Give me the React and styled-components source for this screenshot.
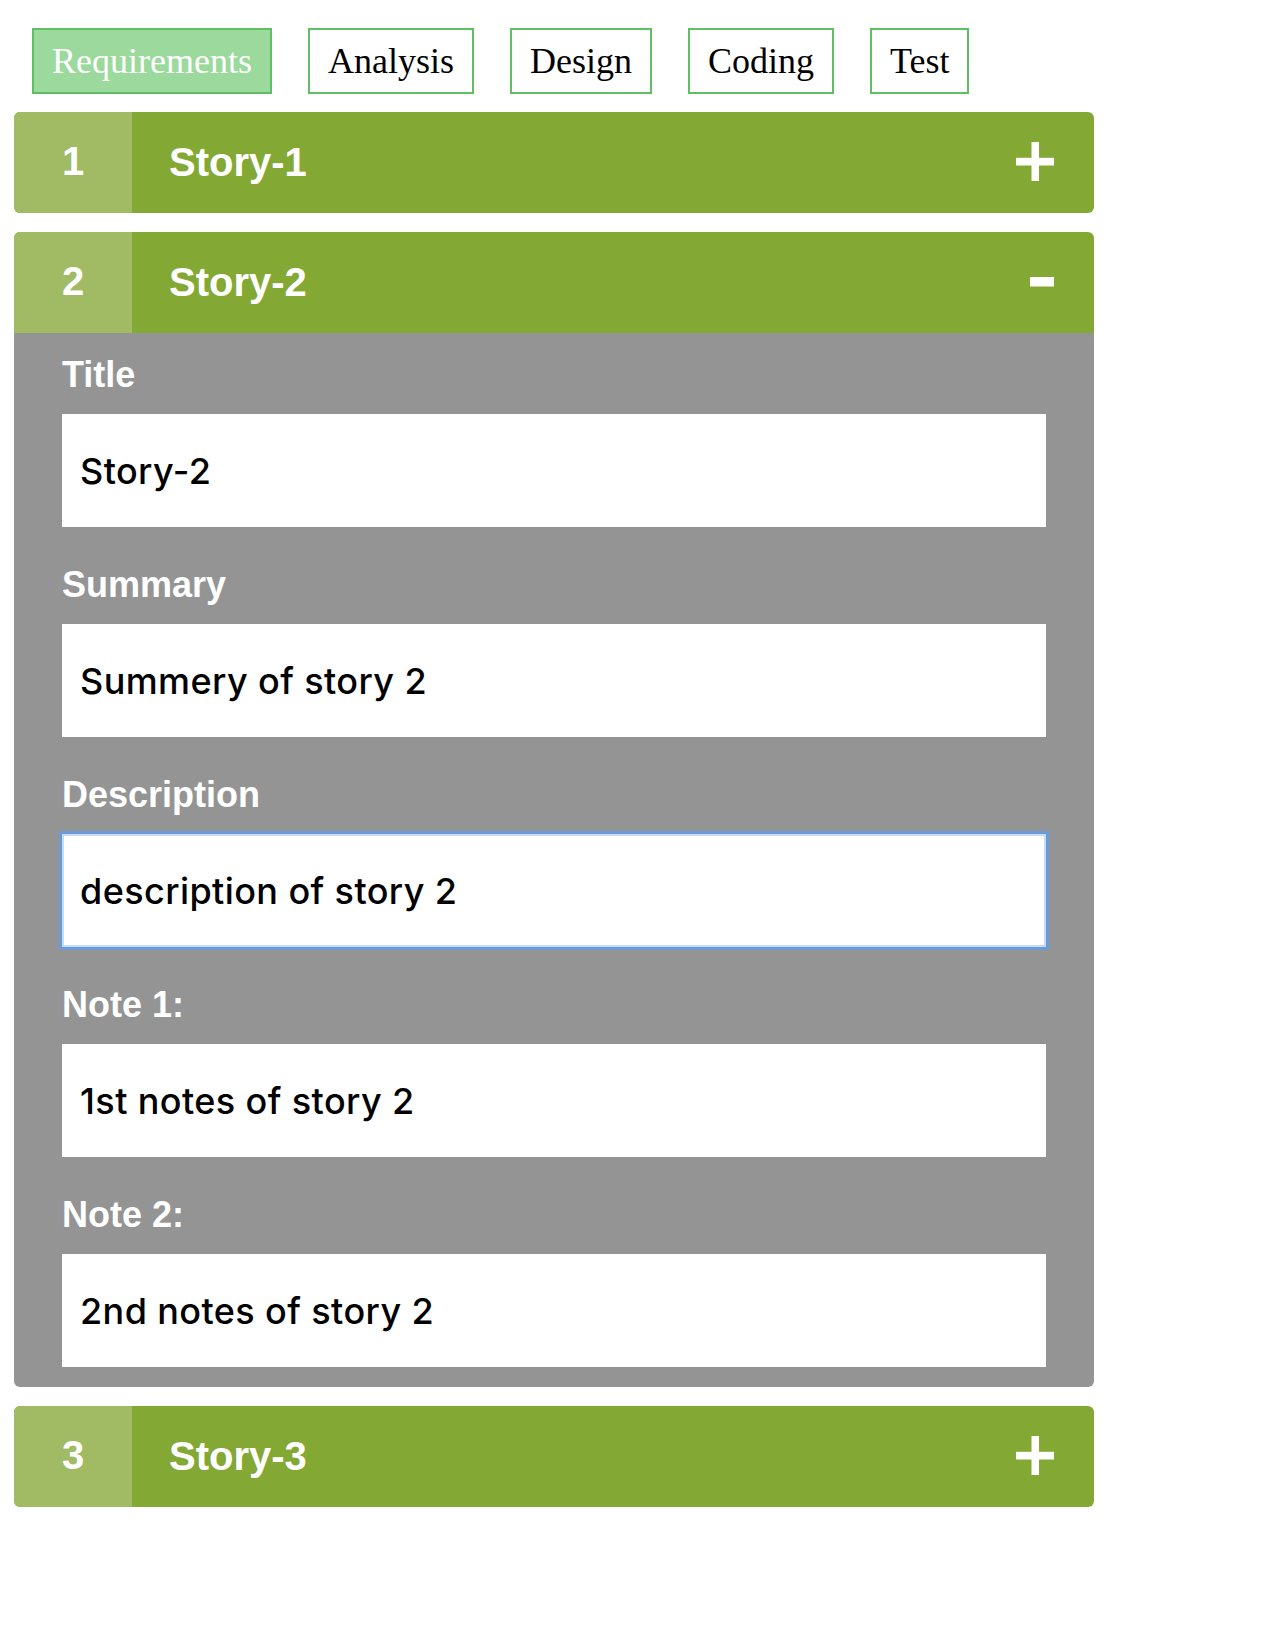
import React, { useState } from 'react'
import styled, { createGlobalStyle } from 'styled-components'

const GlobalStyle = createGlobalStyle`
  body {
    margin: 8px;
    background: #ffffff;
    font-family: "Liberation Sans", Arial, sans-serif;
  }
`

const stages = ['Requirements', 'Analysis', 'Design', 'Coding', 'Test']

const stories = [
  {
    id: 1,
    title: 'Story-1',
    summary: 'Summery of story 1',
    description: 'description of story 1',
    note1: '1st notes of story 1',
    note2: '2nd notes of story 1'
  },
  {
    id: 2,
    title: 'Story-2',
    summary: 'Summery of story 2',
    description: 'description of story 2',
    note1: '1st notes of story 2',
    note2: '2nd notes of story 2'
  },
  {
    id: 3,
    title: 'Story-3',
    summary: 'Summery of story 3',
    description: 'description of story 3',
    note1: '1st notes of story 3',
    note2: '2nd notes of story 3'
  }
]

const fields = [
  { key: 'title', label: 'Title' },
  { key: 'summary', label: 'Summary' },
  { key: 'description', label: 'Description' },
  { key: 'note1', label: 'Note 1:' },
  { key: 'note2', label: 'Note 2:' }
]

function PlusIcon() {
  return (
    <svg width="38" height="40" viewBox="0 0 38 40">
      <rect x="15.5" y="0" width="7.5" height="39" fill="#fff" />
      <rect x="0" y="15.8" width="38" height="7.7" fill="#fff" />
    </svg>
  )
}

function MinusIcon() {
  return (
    <svg width="38" height="40" viewBox="0 0 38 40">
      <rect x="14" y="15" width="24" height="9.5" fill="#fff" />
    </svg>
  )
}

export default function App() {
  const [active, setActive] = useState('Requirements')
  const [open, setOpen] = useState(2)

  return (
    <Page>
      <GlobalStyle />

      {/* stage tabs */}
      <Tabs>
        {stages.map((stage) => (
          <Tab
            key={stage}
            type="button"
            $active={stage === active}
            onClick={() => setActive(stage)}
          >
            {stage}
          </Tab>
        ))}
      </Tabs>

      {/* stories */}
      <Accordion>
        {stories.map((story) => {
          const isOpen = open === story.id
          return (
            <Item key={story.id}>
              <Header onClick={() => setOpen(isOpen ? null : story.id)}>
                <Num>{story.id}</Num>
                <HeaderTitle>{story.title}</HeaderTitle>
                <Toggle>{isOpen ? <MinusIcon /> : <PlusIcon />}</Toggle>
              </Header>

              {isOpen && (
                <Body>
                  {fields.map((f) => (
                    <Field key={f.key}>
                      <Label htmlFor={`${f.key}-${story.id}`}>{f.label}</Label>
                      <Input
                        id={`${f.key}-${story.id}`}
                        defaultValue={story[f.key]}
                        $focused={f.key === 'description'}
                      />
                    </Field>
                  ))}
                </Body>
              )}
            </Item>
          )
        })}
      </Accordion>
    </Page>
  )
}

const Page = styled.div`
  padding: 20px 0 0 6px;
  width: 1080px;
`

const Tabs = styled.div`
  display: flex;
  gap: 36px;
  margin-left: 18px;
`

const Tab = styled.button`
  font-family: "Liberation Serif", "Times New Roman", serif;
  font-size: 36px;
  line-height: 41px;
  padding: 11px 18px 10px;
  border: 2px solid #5fbf63;
  background: ${(p) => (p.$active ? '#9bd99d' : '#ffffff')};
  color: ${(p) => (p.$active ? '#ffffff' : '#000000')};
  cursor: pointer;
  border-radius: 0;
`

const Accordion = styled.div`
  display: flex;
  flex-direction: column;
  gap: 19px;
  margin-top: 18px;
`

const Item = styled.div`
  border-radius: 6px;
  overflow: hidden;
`

const Header = styled.div`
  display: flex;
  align-items: center;
  height: 101px;
  background: #84a834;
  color: #ffffff;
  cursor: pointer;
  font-weight: 700;
  font-size: 40px;
`

const Num = styled.div`
  align-self: stretch;
  width: 118px;
  display: flex;
  align-items: center;
  justify-content: center;
  padding-bottom: 2px;
  box-sizing: border-box;
  background: #a0bb63;
`

const HeaderTitle = styled.div`
  flex: 1;
  padding-left: 37px;
  padding-bottom: 1px;
`

const Toggle = styled.div`
  display: flex;
  margin-right: 40px;
  margin-bottom: 2px;
`

const Body = styled.div`
  background: #949494;
  padding: 21px 48px 20px;
`

const Field = styled.div`
  & + & {
    margin-top: 37px;
  }
`

const Label = styled.label`
  display: block;
  color: #ffffff;
  font-weight: 700;
  font-size: 36px;
  line-height: 41px;
  margin-bottom: 19px;
`

const Input = styled.input`
  display: block;
  box-sizing: border-box;
  width: 100%;
  height: 113px;
  padding: 0 18px;
  border: none;
  outline: none;
  background: #ffffff;
  color: #000000;
  font-family: Inter, "Noto Sans", sans-serif;
  font-weight: 500;
  font-size: 36px;
  letter-spacing: 0.4px;
  box-shadow: ${(p) =>
    p.$focused ? '0 0 0 3px #6b9bd6, inset 0 0 0 2px #c6dbf4' : 'none'};
`
